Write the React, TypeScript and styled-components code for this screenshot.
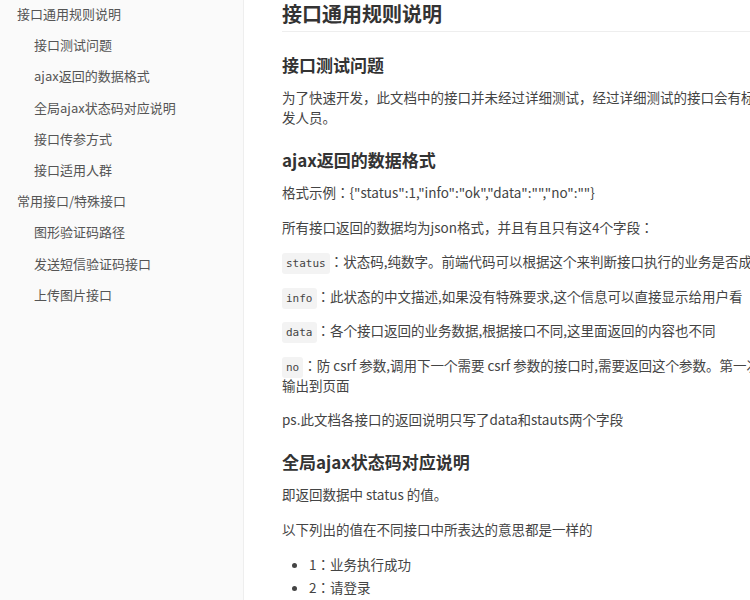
import React from "react";
import styled, { createGlobalStyle } from "styled-components";

const GlobalStyle = createGlobalStyle`
  html, body {
    margin: 0;
    padding: 0;
    overflow: hidden;
    background: #fff;
  }
  body {
    font-family: "Noto Sans CJK JP", "Noto Sans CJK SC", "Noto Sans", sans-serif;
  }
`;

const Page = styled.div`
  display: flex;
  width: 750px;
  height: 600px;
  overflow: hidden;
`;

const Sidebar = styled.nav`
  flex: 0 0 243px;
  background: #fafafa;
  border-right: 1px solid #eeeeee;
  margin-top: -2px;
`;

const NavItem = styled.div<{ $child?: boolean }>`
  height: 31.2px;
  line-height: 31.2px;
  padding-left: ${(p) => (p.$child ? "34px" : "17px")};
  font-size: 13px;
  color: #555;
  white-space: nowrap;
`;

const Main = styled.main`
  flex: 1;
  padding-left: 38px;
  overflow: hidden;
`;

const Article = styled.article`
  width: 540px;
  color: #444;
  font-size: 13.5px;
`;

const Title = styled.h1`
  margin: 0 0 21px;
  padding-bottom: 3px;
  font-size: 20px;
  line-height: 28px;
  font-weight: 700;
  color: #333;
  border-bottom: 1px solid #eeeeee;
`;

const Heading = styled.h2`
  margin: 21px 0 10px;
  font-size: 17px;
  line-height: 24px;
  font-weight: 700;
  color: #333;
`;

const Para = styled.p`
  margin: 0 0 14.5px;
  line-height: 20px;
`;

const Code = styled.code`
  font-family: "DejaVu Sans Mono", "Liberation Mono", monospace;
  font-size: 11px;
  line-height: 1;
  background: #f3f3f3;
  border-radius: 3px;
  padding: 4px 4px;
  color: #444;
`;

const List = styled.ul`
  margin: 0;
  padding-left: 27px;
`;

const Item = styled.li`
  line-height: 23px;
`;

const nav: { label: string; child?: boolean }[] = [
  { label: "接口通用规则说明" },
  { label: "接口测试问题", child: true },
  { label: "ajax返回的数据格式", child: true },
  { label: "全局ajax状态码对应说明", child: true },
  { label: "接口传参方式", child: true },
  { label: "接口适用人群", child: true },
  { label: "常用接口/特殊接口" },
  { label: "图形验证码路径", child: true },
  { label: "发送短信验证码接口", child: true },
  { label: "上传图片接口", child: true },
];

export default function App() {
  return (
    <Page>
      <GlobalStyle />
      <Sidebar>
        {nav.map((n) => (
          <NavItem key={n.label} $child={n.child}>
            {n.label}
          </NavItem>
        ))}
      </Sidebar>
      <Main>
        <Article>
          <Title>接口通用规则说明</Title>
          <Heading>接口测试问题</Heading>
          <Para>
            为了快速开发，此文档中的接口并未经过详细测试，经过详细测试的接口会有标注，告知开发人员。
          </Para>
          <Heading>ajax返回的数据格式</Heading>
          <Para>格式示例：{'{"status":1,"info":"ok","data":"","no":""}'}</Para>
          <Para>所有接口返回的数据均为json格式，并且有且只有这4个字段：</Para>
          <Para>
            <Code>status</Code>：状态码,纯数字。前端代码可以根据这个来判断接口执行的业务是否成功
          </Para>
          <Para>
            <Code>info</Code>：此状态的中文描述,如果没有特殊要求,这个信息可以直接显示给用户看
          </Para>
          <Para>
            <Code>data</Code>：各个接口返回的业务数据,根据接口不同,这里面返回的内容也不同
          </Para>
          <Para>
            <Code>no</Code>：防 csrf 参数,调用下一个需要 csrf 参数的接口时,需要返回这个参数。第一次会由后端输出到页面
          </Para>
          <Para>ps.此文档各接口的返回说明只写了data和stauts两个字段</Para>
          <Heading>全局ajax状态码对应说明</Heading>
          <Para>即返回数据中 status 的值。</Para>
          <Para>以下列出的值在不同接口中所表达的意思都是一样的</Para>
          <List>
            <Item>1：业务执行成功</Item>
            <Item>2：请登录</Item>
          </List>
        </Article>
      </Main>
    </Page>
  );
}
